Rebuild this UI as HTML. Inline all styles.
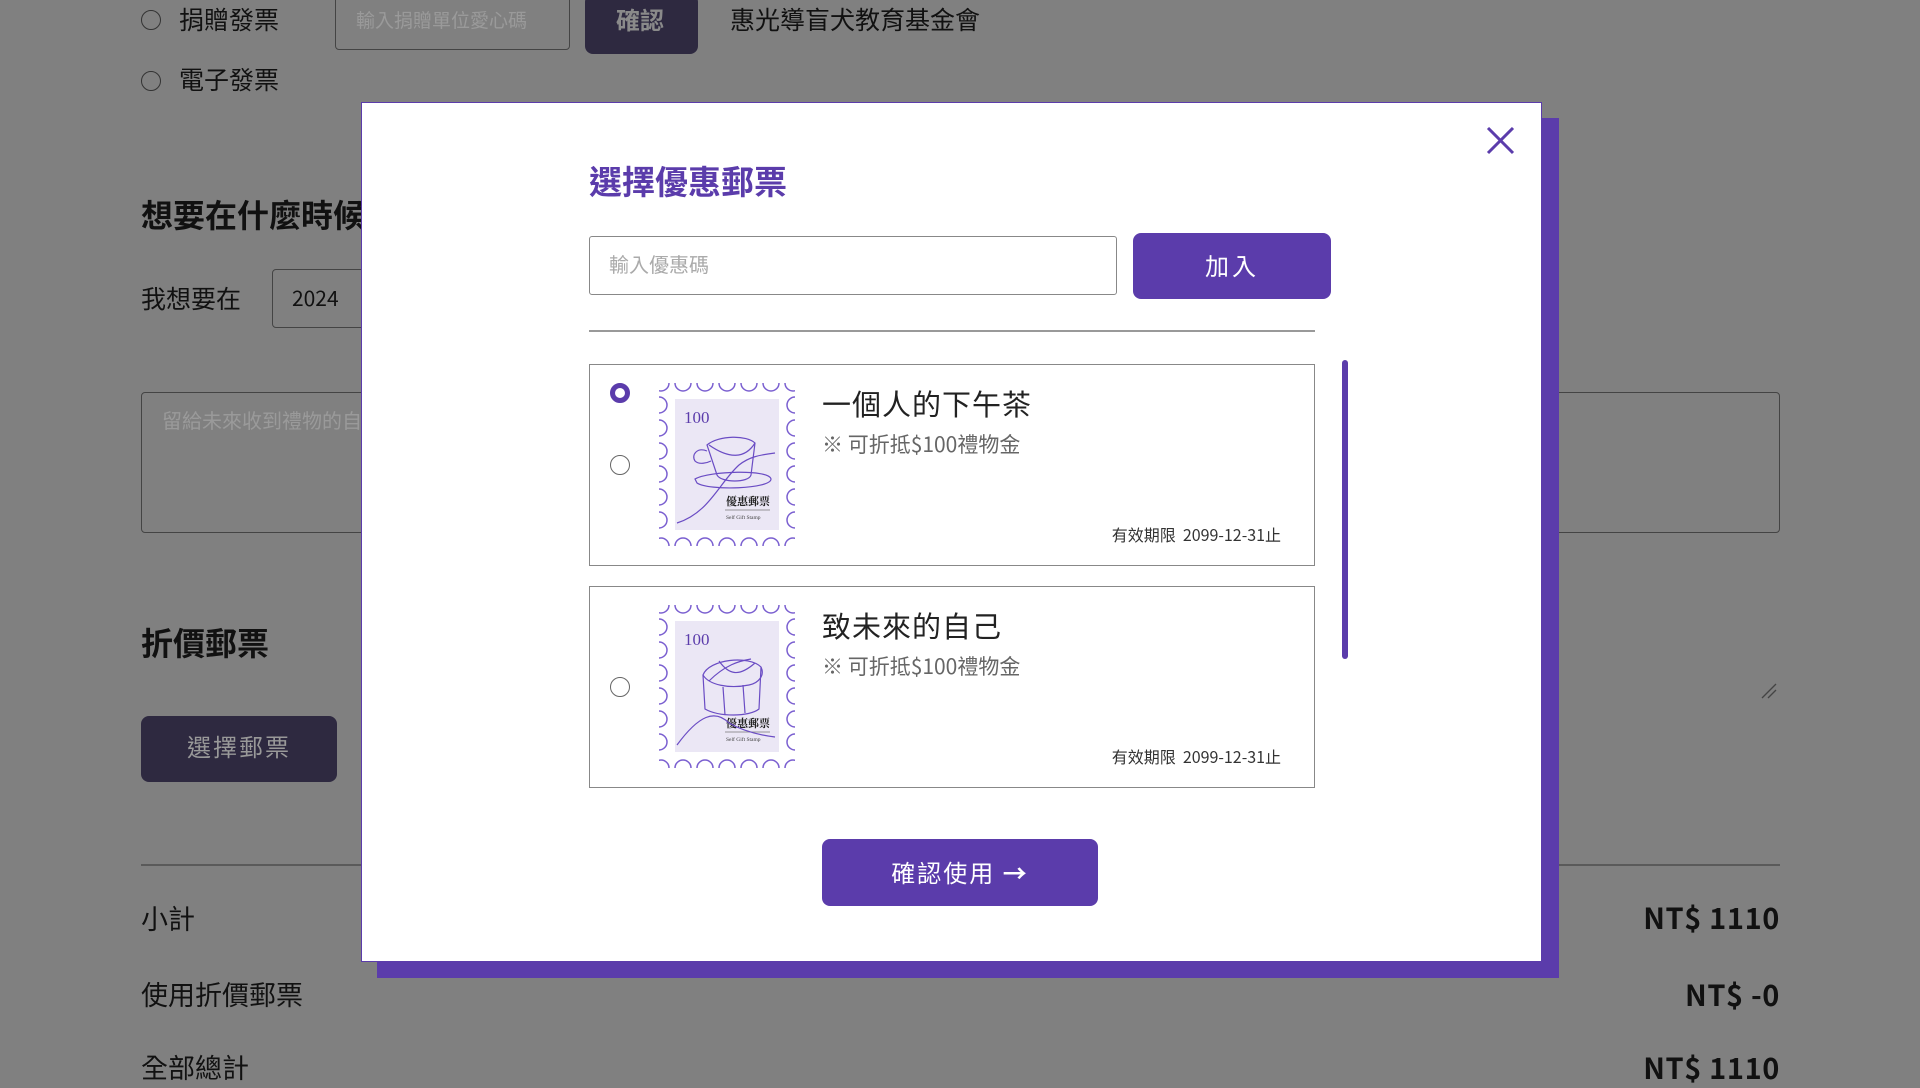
<!DOCTYPE html>
<html><head><meta charset="utf-8"><style>
*{box-sizing:border-box;margin:0;padding:0}
body{width:1920px;height:1080px;overflow:hidden;background:#808080;font-family:"Noto Sans CJK TC","Liberation Sans",sans-serif;line-height:1.15;position:relative;color:#111}
.a{position:absolute;white-space:nowrap}
.rad{position:absolute;width:20px;height:20px;border:1.5px solid #333;border-radius:50%}
.t24{font-size:25px;line-height:1}
.modal{position:absolute;left:361px;top:102px;width:1181px;height:860px;background:#fff;border:1px solid #5b3cab}
.shadow{position:absolute;left:377px;top:118px;width:1182px;height:860px;background:#5b3cab}
.card{position:absolute;left:589px;width:726px;border:1.5px solid #888;background:#fff}
.mr{position:absolute;left:610px;width:20px;height:20px;border-radius:50%;border:1.5px solid #666;background:#fff}
.ttl{font-size:29px;color:#222;letter-spacing:1px}
.sub{font-size:21px;color:#666}
.val{font-size:16px;color:#333}
.nt{font-size:29px;font-weight:bold;letter-spacing:0.6px}
</style></head><body>
<!-- background page -->
<div class="rad" style="left:141px;top:10px"></div>
<div class="a t24" style="left:179px;top:7px">捐贈發票</div>
<div class="a" style="left:335px;top:-4px;width:235px;height:54px;border:1.5px solid #444;border-radius:4px"></div>
<div class="a" style="left:356px;top:9px;font-size:19px;color:#9a9a9a">輸入捐贈單位愛心碼</div>
<div class="a" style="left:585px;top:-6px;width:113px;height:60px;background:#2e2940;border-radius:8px"></div>
<div class="a" style="left:616px;top:5px;font-size:24px;color:#8a8a8a;font-weight:bold">確認</div>
<div class="a t24" style="left:730px;top:7px">惠光導盲犬教育基金會</div>
<div class="rad" style="left:141px;top:71px"></div>
<div class="a t24" style="left:179px;top:67px">電子發票</div>
<div class="a" style="left:141px;top:196px;font-size:32px;font-weight:bold">想要在什麼時候</div>
<div class="a t24" style="left:141px;top:286px">我想要在</div>
<div class="a" style="left:272px;top:269px;width:120px;height:59px;border:1.5px solid #444;border-radius:4px"></div>
<div class="a" style="left:292px;top:286px;font-size:21px">2024</div>
<div class="a" style="left:141px;top:392px;width:1639px;height:141px;border:1.5px solid #444;border-radius:4px"></div>
<div class="a" style="left:162px;top:408px;font-size:20px;color:#9a9a9a">留給未來收到禮物的自己</div>
<svg class="a" style="left:1758px;top:680px" width="20" height="20"><path d="M4 18L18 4M10 18L18 10" stroke="#444" stroke-width="1.3"/></svg>
<div class="a" style="left:141px;top:624px;font-size:32px;font-weight:bold">折價郵票</div>
<div class="a" style="left:141px;top:716px;width:196px;height:66px;background:#2e2940;border-radius:8px"></div>
<div class="a" style="left:187px;top:732px;font-size:24px;color:#999;letter-spacing:2px">選擇郵票</div>
<div class="a" style="left:141px;top:864px;width:1639px;height:2px;background:#5a5a5a"></div>
<div class="a t24" style="left:141px;top:904px;font-size:27px">小計</div>
<div class="a nt" style="right:140px;top:901px">NT$ 1110</div>
<div class="a t24" style="left:141px;top:980px;font-size:27px">使用折價郵票</div>
<div class="a nt" style="right:140px;top:978px">NT$ -0</div>
<div class="a t24" style="left:141px;top:1053px;font-size:27px">全部總計</div>
<div class="a nt" style="right:140px;top:1051px">NT$ 1110</div>

<!-- modal -->
<div class="shadow"></div>
<div class="modal"></div>
<svg class="a" style="left:1486px;top:126px" width="29" height="29"><path d="M2 2L27 27M27 2L2 27" stroke="#5b3cab" stroke-width="3"/></svg>
<div class="a" style="left:589px;top:162px;font-size:33px;font-weight:bold;color:#5b3cab">選擇優惠郵票</div>
<div class="a" style="left:589px;top:236px;width:528px;height:59px;border:1.5px solid #888;border-radius:3px"></div>
<div class="a" style="left:609px;top:252px;font-size:20px;color:#aaa">輸入優惠碼</div>
<div class="a" style="left:1133px;top:233px;width:198px;height:66px;background:#5b3cab;border-radius:8px;color:#fff;font-size:24px;text-align:center;line-height:64px;letter-spacing:3px">加入</div>
<div class="a" style="left:589px;top:330px;width:726px;height:2px;background:#999"></div>
<div class="a" style="left:1342px;top:360px;width:6px;height:299px;background:#5b3cab;border-radius:3px"></div>

<svg width="0" height="0" style="position:absolute">
<defs>
<clipPath id="cp"><rect x="0" y="0" width="136" height="163"/></clipPath>
<g id="frame">
<g clip-path="url(#cp)" fill="#fff" stroke="#7a5fd0" stroke-width="1.5">
<circle cx="2" cy="0" r="8"/><circle cx="24" cy="0" r="8"/><circle cx="46" cy="0" r="8"/><circle cx="68" cy="0" r="8"/><circle cx="90" cy="0" r="8"/><circle cx="112" cy="0" r="8"/><circle cx="134" cy="0" r="8"/>
<circle cx="2" cy="163" r="8"/><circle cx="24" cy="163" r="8"/><circle cx="46" cy="163" r="8"/><circle cx="68" cy="163" r="8"/><circle cx="90" cy="163" r="8"/><circle cx="112" cy="163" r="8"/><circle cx="134" cy="163" r="8"/>
<circle cx="0" cy="22" r="8"/><circle cx="0" cy="45" r="8"/><circle cx="0" cy="68" r="8"/><circle cx="0" cy="91" r="8"/><circle cx="0" cy="114" r="8"/><circle cx="0" cy="137" r="8"/>
<circle cx="136" cy="22" r="8"/><circle cx="136" cy="45" r="8"/><circle cx="136" cy="68" r="8"/><circle cx="136" cy="91" r="8"/><circle cx="136" cy="114" r="8"/><circle cx="136" cy="137" r="8"/>
</g>
<rect x="16" y="16" width="104" height="131" fill="#ebe7f5"/>
<text x="25" y="40" font-family="Liberation Serif,serif" font-size="17" fill="#5b3cab">100</text>
<text x="67" y="122" font-family="Noto Serif CJK SC,serif" font-size="11" font-weight="bold" fill="#222">優惠郵票</text>
<line x1="66" y1="127" x2="111" y2="127" stroke="#777" stroke-width="0.8"/>
<text x="67" y="136" font-family="Liberation Serif,serif" font-size="5.5" fill="#444">Self Gift Stamp</text>
</g>
</defs></svg>

<!-- card 1 -->
<div class="card" style="top:364px;height:202px"></div>
<div class="a" style="left:610px;top:383px;width:20px;height:20px;border-radius:50%;border:5px solid #5b3cab"></div>
<div class="mr" style="top:455px"></div>
<svg class="a" style="left:659px;top:383px" width="136" height="163"><use href="#frame"/>
<g fill="none" stroke="#6a4cc4" stroke-width="1.2"><path d="M48 62C60 52 88 52 96 60L92 92C90 100 62 100 58 92Z"/><path d="M48 68C38 64 32 72 36 78C40 82 48 80 52 78"/><path d="M36 96C50 88 110 86 112 96C112 106 50 108 38 100Z"/><path d="M18 140C50 130 60 100 80 82C90 74 100 72 116 70"/><path d="M50 62C70 76 86 76 96 60"/></g></svg>
<div class="a ttl" style="left:822px;top:387px">一個人的下午茶</div>
<div class="a sub" style="left:822px;top:432px">※ 可折抵$100禮物金</div>
<div class="a val" style="right:639px;top:525px">有效期限&nbsp; 2099-12-31止</div>

<!-- card 2 -->
<div class="card" style="top:586px;height:202px"></div>
<div class="mr" style="top:677px"></div>
<svg class="a" style="left:659px;top:605px" width="136" height="163"><use href="#frame"/>
<g fill="none" stroke="#6a4cc4" stroke-width="1.2"><path d="M44 70C50 54 90 50 102 62C106 70 100 78 90 80C70 84 50 80 44 70Z"/><path d="M44 70L46 104C60 112 90 112 100 104L102 62"/><path d="M64 82L66 110M84 80L86 108"/><path d="M60 56C70 70 80 72 96 58M50 76C66 60 80 56 92 54"/><path d="M18 140C40 110 56 104 70 118C84 126 100 130 116 132"/></g></svg>
<div class="a ttl" style="left:822px;top:609px">致未來的自己</div>
<div class="a sub" style="left:822px;top:654px">※ 可折抵$100禮物金</div>
<div class="a val" style="right:639px;top:747px">有效期限&nbsp; 2099-12-31止</div>

<div class="a" style="left:822px;top:839px;width:276px;height:67px;background:#5b3cab;border-radius:8px;color:#fff;font-size:24px;text-align:center;line-height:65px;letter-spacing:2px">確認使用 <span style="font-weight:bold">→</span></div>
</body></html>
